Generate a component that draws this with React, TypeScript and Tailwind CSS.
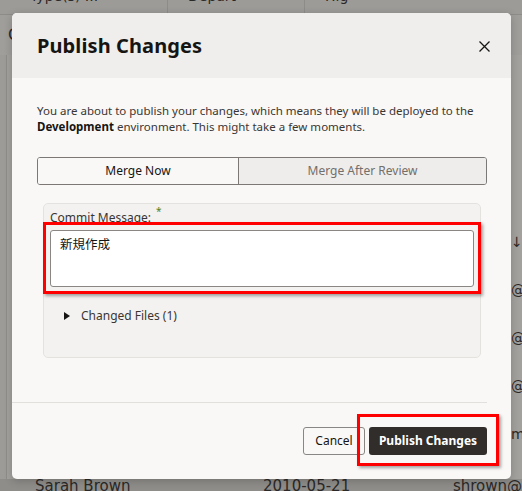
import React from 'react';

const font = { fontFamily: '"Noto Sans", "Open Sans", "Noto Sans CJK JP", sans-serif' };

const BackgroundTable: React.FC = () => (
  <div className="absolute inset-0 flex flex-col bg-[#9d9b98] text-[#2b2927]" style={{ fontFamily: '"DejaVu Sans", "Liberation Sans", sans-serif' }}>
    <div className="h-[15px] flex text-[14px] leading-[14px] border-b border-[#8e8c89] overflow-hidden">
      <div className="w-[168px] pl-[30px] border-r border-[#8e8c89] -mt-[11px]">Type(s) ...</div>
      <div className="w-[137px] pl-[20px] border-r border-[#8e8c89] -mt-[11px]">Depart</div>
      <div className="flex-1 pl-[20px] -mt-[11px]">Hig</div>
    </div>
    <div className="h-[40px] flex items-center pl-[8px] text-[16px] bg-[#a09e9b]">C</div>
    <div className="flex-1 ml-[6px] bg-[#a3a19e] border-l border-[#8f8d8a]" />
    <div className="h-[12px] flex text-[15px] leading-[15px] bg-[#8f8d8a]">
      <div className="w-[268px] pl-[35px]">Sarah Brown</div>
      <div className="w-[194px]">2010-05-21</div>
      <div className="flex-1">shrown@</div>
    </div>
  </div>
);

const App: React.FC = () => {
  return (
    <div className="relative w-[522px] h-[491px] overflow-hidden" style={font}>
      <BackgroundTable />

      {/* right side peek of table rows */}
      <div className="absolute left-[511px] top-[232px] flex flex-col text-[14px] text-[#2b2927] gap-[27px]" style={{ fontFamily: '"DejaVu Sans", sans-serif' }}>
        <span>↓</span>
        <span>@</span>
        <span>@</span>
        <span>@</span>
        <span>m</span>
      </div>

      <div className="absolute left-[12px] top-[13px] w-[499px] h-[466px] rounded-[5px] bg-[#f9f8f6] overflow-hidden shadow-[0_2px_8px_rgba(0,0,0,0.2)] flex flex-col">
        <div className="h-[65px] shrink-0 bg-[#efeeec] flex items-center justify-between pl-[25px] pr-[21px]">
          <h1 className="text-[20px] font-bold text-[#161513] tracking-[0.1px]">Publish Changes</h1>
          <svg width="11" height="11" viewBox="0 0 11 11" className="mt-[1px]">
            <path d="M0.5 0.5 L10.5 10.5 M10.5 0.5 L0.5 10.5" stroke="#161513" strokeWidth="1.3" />
          </svg>
        </div>

        <div className="flex-1 flex flex-col pl-[25px] pr-[24px] pt-[25px]">
          <p className="text-[11.5px] leading-[16px] text-[#3a3633]">
            You are about to publish your changes, which means they will be deployed to the{' '}
            <span className="font-bold text-[#161513]">Development</span> environment. This might take a few moments.
          </p>

          <div className="mt-[22px] h-[28px] shrink-0 flex border border-[#7c7875] rounded-[3px] overflow-hidden text-[12px]">
            <div className="w-[201px] flex items-center justify-center bg-[#f9f8f6] text-[#161513] border-r border-[#7c7875]">
              Merge Now
            </div>
            <div className="flex-1 flex items-center justify-center bg-[#eeedeb] text-[#736f6b]">
              Merge After Review
            </div>
          </div>

          <div className="mt-[18px] mx-[6px] h-[155px] shrink-0 rounded-[5px] bg-[#f3f2f0] border border-[#e4e2df] px-[6px] pt-[6px]">
            <div className="text-[12px] leading-[16px] text-[#3a3633] flex">
              Commit Message:
              <span className="text-[#508223] text-[10px] leading-[10px] ml-[5px] -mt-[4px]">*</span>
            </div>
            <div className="mt-[4px] h-[57px] bg-white border border-[#8a8683] rounded-[3px] px-[9px] pt-[5px] text-[12.5px] text-[#161513]">
              新規作成
            </div>
            <div className="mt-[21px] h-[16px] flex items-center pl-[14px] text-[12px] text-[#3a3633]">
              <svg width="6" height="8" viewBox="0 0 6 8" className="mr-[11px]">
                <path d="M0 0 L6 4 L0 8 Z" fill="#161513" />
              </svg>
              Changed Files (1)
            </div>
          </div>

          <div className="mt-[44px] -ml-[25px] border-t border-[#e2e0dd]" />

          <div className="mt-[24px] flex justify-end gap-[4px]">
            <button className="h-[28px] w-[62px] border border-[#8a8683] rounded-[3px] bg-[#f9f8f6] text-[12px] text-[#161513]">
              Cancel
            </button>
            <button className="h-[28px] w-[118px] rounded-[3px] bg-[#312d2a] text-[12px] font-bold text-white">
              Publish Changes
            </button>
          </div>
        </div>
      </div>

      {/* annotation highlights */}
      <div className="absolute left-[43px] top-[222px] w-[438px] h-[72px] border-[3px] border-[#ff0000] shadow-[2px_2px_3px_rgba(0,0,0,0.35)]" />
      <div className="absolute left-[357px] top-[414px] w-[142px] h-[52px] border-[3px] border-[#ff0000] shadow-[2px_2px_3px_rgba(0,0,0,0.35)]" />
    </div>
  );
};

export default App;
